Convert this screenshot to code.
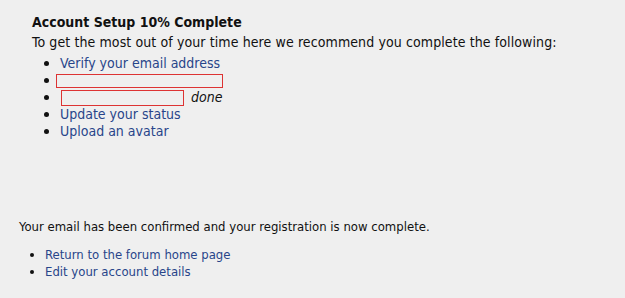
import React from "react";

const link = "text-[#28458a] hover:underline";

export default function App() {
    return (
        <div className="w-[625px] h-[298px] bg-[#efefef] text-[#111] text-[13px] leading-[17px] font-['DejaVu_Sans_Condensed','DejaVu_Sans',sans-serif] overflow-hidden">
            <div className="pl-[32px] pt-[13px] text-[14px] leading-[17px]">
                <h2 className="text-[14px] leading-[18px] font-bold">Account Setup 10% Complete</h2>
                <p className="mt-[3px] tracking-[0.1px]">To get the most out of your time here we recommend you complete the following:</p>
                <ul className="mt-[4px] pl-[28px] list-disc marker:text-[15px]">
                    <li><a href="#" className={link}>Verify your email address</a></li>
                    <li>
                        <span className="inline-block align-middle w-[167px] h-[14px] border border-[#d33] -ml-[4px]"></span>
                    </li>
                    <li>
                        <span className="inline-block align-middle w-[123px] h-[16px] border border-[#d33] ml-[1px]"></span>
                        <span className="ml-[7px] italic">done</span>
                    </li>
                    <li><a href="#" className={link}>Update your status</a></li>
                    <li><a href="#" className={link}>Upload an avatar</a></li>
                </ul>
            </div>
            <div className="pl-[19px] mt-[78px]">
                <p>Your email has been confirmed and your registration is now complete.</p>
                <ul className="mt-[11px] pl-[26px] list-disc leading-[16px] marker:text-[14px]">
                    <li><a href="#" className={link}>Return to the forum home page</a></li>
                    <li><a href="#" className={link}>Edit your account details</a></li>
                </ul>
            </div>
        </div>
    );
}
